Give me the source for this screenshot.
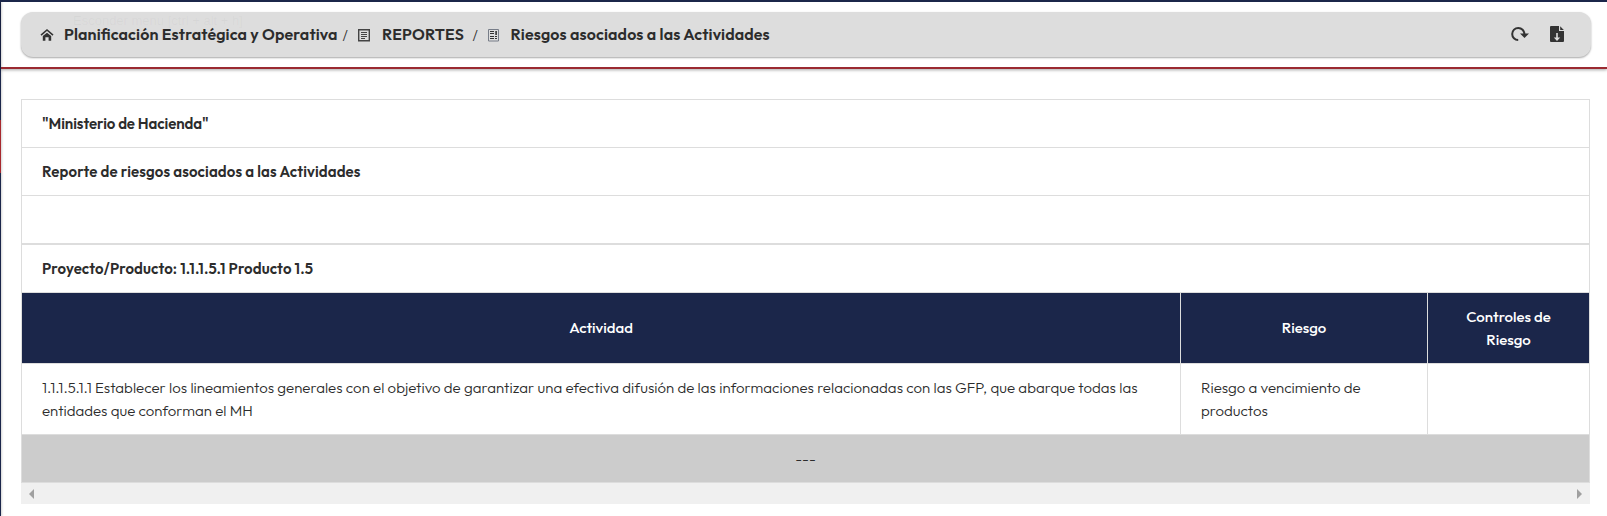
<script>
  const title = ['"Ministerio de Hacienda"', 'Reporte de riesgos asociados a las Actividades'];
</script>

<div class="page">
  <div class="rail"><div class="mark"></div></div>
  <div class="content">
    <header class="top">
      <div class="bar">
        <nav>
          <svg class="home" width="14" height="14" viewBox="0 0 14 14"><path d="M1 7.1 7 2l6 5.1" fill="none" stroke="#333" stroke-width="1.6"/><path d="M2.8 8 7 4.7 11.2 8v4.7H8.6V9.2H5.4v3.5H2.8z" fill="#333"/></svg>
          <b class="c1">Planificación Estratégica y Operativa</b>
          <i>/</i>
          <svg class="doc" width="12" height="13" viewBox="0 0 12 13"><path d="M.7.7h10.6v11H.7z" fill="none" stroke="#444" stroke-width="1.4"/><path d="M3 3.5h6M3 5.5h6M3 7.5h6M3 9.5h4" stroke="#333" stroke-width=".9"/></svg>
          <b class="c2">REPORTES</b>
          <i>/</i>
          <svg class="news" width="11" height="13" viewBox="0 0 11 13"><path d="M.5.5h10v11.5H.5z" fill="none" stroke="#777d88"/><path d="M2 2.5h4M2 4.5h4M2 7.5h4M2 9.5h4M7 7.5h2M7 9.5h2" stroke="#333"/><path d="M7.3 2h1.6v4H7.3z" fill="#333"/></svg>
          <b class="c3">Riesgos asociados a las Actividades</b>
        </nav>
        <div class="actions">
          <svg width="18" height="16" viewBox="0 0 18 16"><path d="M7.2 14.1A6.1 6.1 0 1 1 13.4 8" fill="none" stroke="#333" stroke-width="2"/><path d="M9 7.5h9L13.5 12z" fill="#333"/></svg>
          <svg width="14" height="16" viewBox="0 0 14 16"><path d="M1 0h8v5h5v10a1 1 0 0 1-1 1H1a1 1 0 0 1-1-1V1a1 1 0 0 1 1-1z" fill="#333"/><path d="M10.2.2 13.8 4h-3.6z" fill="#333"/><path d="M6.2 7h1.6v4.5h2.4L7 15l-3.2-3.5h2.4z" fill="#ddd"/></svg>
        </div>
        <div class="tip">Esconder menu [ctrl + alt + h]</div>
      </div>
    </header>
    <main>
      <div class="table">
        <div class="row strong t0">{title[0]}</div>
        <div class="row strong">{title[1]}</div>
        <div class="row"></div>
      </div>
      <div class="table">
        <div class="row strong">Proyecto/Producto: 1.1.1.5.1 Producto 1.5</div>
        <div class="grid head">
          <div>Actividad</div>
          <div>Riesgo</div>
          <div>Controles de<br />Riesgo</div>
        </div>
        <div class="grid data">
          <div><span class="d1">1.1.1.5.1.1 Establecer los lineamientos generales con el objetivo de garantizar una efectiva difusión de las informaciones relacionadas con las GFP, que abarque todas las</span><br />entidades que conforman el MH</div>
          <div>Riesgo a vencimiento de<br />productos</div>
          <div></div>
        </div>
        <div class="row none">---</div>
      </div>
      <div class="scroll">
        <svg width="5" height="10" viewBox="0 0 5 10"><path d="M5 0v10L0 5z" fill="#a0a0a0"/></svg>
        <svg width="5" height="10" viewBox="0 0 5 10"><path d="M0 0v10l5-5z" fill="#a0a0a0"/></svg>
      </div>
    </main>
  </div>
</div>

<style>
  .page { box-sizing: border-box; display: flex; height: 516px; overflow: hidden; border-top: 2px solid #1b264a; background: #fff; color: #2c2c2c; font: 300 15px/23px Outfit, Lato, sans-serif; font-feature-settings: "liga" 1; }
  .rail { width: 1px; background: #1b264a; padding-top: 118px; box-sizing: border-box; box-shadow: 1px 0 2px rgba(0,0,0,.25); }
  .mark { height: 53px; background: #a8282e; }
  .content { flex: 1; min-width: 0; }
  .top { box-sizing: border-box; height: 67px; padding: 10px 16.5px 0 19.5px; border-bottom: 2px solid #9b2a31; box-shadow: 0 1px 3px rgba(0,0,0,.35); }
  .bar { position: relative; box-sizing: border-box; height: 45px; display: flex; justify-content: space-between; align-items: center; padding: 0 26.5px 0 19.5px; background: #ddd; border-radius: 12px; box-shadow: 0 1px 2px rgba(0,0,0,.35); }
  nav { display: flex; align-items: center; font-size: 16px; white-space: nowrap; }
  nav b { display: block; font-weight: 600; }
  nav i { font-style: normal; font-size: 14px; width: 6px; padding-top: 1px; }
  .home { margin-right: 10px; }
  .c1 { width: 275px; margin-right: 3.5px; letter-spacing: .125px; }
  .c2 { width: 85px; margin-right: 5.5px; letter-spacing: .2px; }
  .c3 { letter-spacing: .12px; }
  .doc { margin: 1px 12px 0 9.5px; }
  .news { margin: 1px 12px 0 9px; }
  .actions { display: flex; gap: 21px; margin-bottom: 1px; }
  .tip { position: absolute; left: 52.5px; top: -3px; color: rgba(120,120,120,.06); font: 13px/24px "Liberation Sans", sans-serif; white-space: nowrap; pointer-events: none; }
  main { padding: 30px 17px 0 20px; }
  .table { border: 1px solid #ddd; border-bottom: 0; }
  .row { box-sizing: border-box; height: 48px; padding: 12px 20px; border-bottom: 1px solid #ddd; }
  .strong { font-weight: 600; letter-spacing: .115px; }
  .t0 { letter-spacing: -.08px; }
  .grid { display: grid; grid-template-columns: 1159px 247px 1fr; }
  .grid > div { box-sizing: border-box; height: 71px; padding: 12px 20px; border-bottom: 1px solid #ddd; border-right: 1px solid #ddd; }
  .grid > div:last-child { border-right: 0; }
  .head > div { display: flex; align-items: center; justify-content: center; text-align: center; padding: 0 20px 1px; background: #1b264a; color: #fff; font-weight: 500; }
  .data { white-space: nowrap; }
  .d1 { letter-spacing: .02px; }
  .none { background: #ccc; text-align: center; }
  .scroll { height: 21px; box-sizing: border-box; display: flex; justify-content: space-between; align-items: center; padding: 0 8px; background: #f0f0f0; }
</style>
